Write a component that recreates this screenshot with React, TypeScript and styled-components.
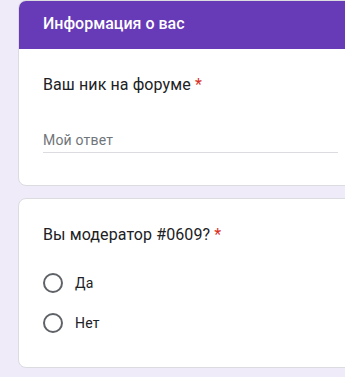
import styled, { createGlobalStyle } from "styled-components";

const GlobalStyle = createGlobalStyle`
  html, body {
    margin: 0;
    padding: 0;
    overflow: hidden;
    background: #f0ebf8;
    font-family: Roboto, "Liberation Sans", Arial, sans-serif;
  }
`;

function App() {
  return (
    <>
      <GlobalStyle />
      <Page>
        <Card>
          <Section.Header>Информация о вас</Section.Header>
          <Card.Body>
            <Question>
              Ваш ник на форуме <Required>*</Required>
            </Question>
            <AnswerField placeholder="Мой ответ" />
          </Card.Body>
        </Card>

        <Card>
          <Card.Body>
            <Question>
              Вы модератор #0609? <Required>*</Required>
            </Question>
            <Options>
              <Option>
                <Radio />
                <OptionLabel>Да</OptionLabel>
              </Option>
              <Option>
                <Radio />
                <OptionLabel>Нет</OptionLabel>
              </Option>
            </Options>
          </Card.Body>
        </Card>
      </Page>
    </>
  );
}

const Page = styled.main`
  display: flex;
  flex-direction: column;
  gap: 12px;
  padding: 0 0 0 18px;
`;

const CardBox = styled.section`
  width: 640px;
  box-sizing: border-box;
  background: #ffffff;
  border: 1px solid #dadce0;
  border-radius: 8px;
  overflow: hidden;
`;

const CardBody = styled.div`
  padding: 24px 24px 24px;
`;

const Card = Object.assign(CardBox, { Body: CardBody });

const Section = {
  Header: styled.h2`
    margin: -1px -1px 0;
    height: 49px;
    box-sizing: border-box;
    padding: 12px 24px 0 25px;
    background: #673ab7;
    color: #ffffff;
    font-size: 16px;
    font-weight: 500;
    line-height: 24px;
    letter-spacing: 0;
  `,
};

const Question = styled.div`
  color: #202124;
  font-size: 16px;
  line-height: 24px;
  letter-spacing: 0.1px;
`;

const Required = styled.span`
  color: #d93025;
`;

const AnswerField = styled.input`
  display: block;
  width: 50%;
  margin: 31px 0 8px;
  padding: 0;
  height: 24px;
  box-sizing: content-box;
  border: none;
  border-bottom: 1px solid #dadce0;
  outline: none;
  background: transparent;
  font-family: inherit;
  font-size: 14px;
  letter-spacing: 0.2px;
  color: #202124;

  &::placeholder {
    color: #70757a;
  }
`;

const Options = styled.div`
  display: flex;
  flex-direction: column;
  margin-top: 16px;
`;

const Option = styled.label`
  display: flex;
  align-items: center;
  gap: 12px;
  height: 40px;
`;

const Radio = styled.span`
  width: 20px;
  height: 20px;
  box-sizing: border-box;
  border: 2px solid #5f6368;
  border-radius: 50%;
  flex-shrink: 0;
`;

const OptionLabel = styled.span`
  color: #202124;
  font-size: 14px;
  letter-spacing: 0.2px;
`;

export default App;
